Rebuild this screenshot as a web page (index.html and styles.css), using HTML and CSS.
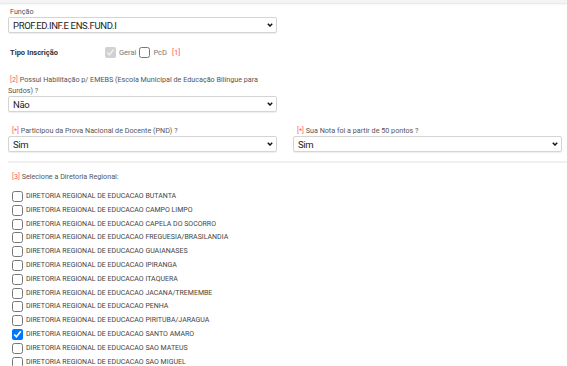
FILE: index.html
```html
<!DOCTYPE html>
<html lang="pt-BR">
<head>
    <meta charset="utf-8">
    <title>Inscrição</title>
    <link rel="stylesheet" href="styles.css">
</head>
<body>
    <div class="topo"></div>

    <div class="campo campo-funcao">
      <label class="rotulo" for="funcao">Função</label>
      <div class="selecao">
        <select id="funcao" class="caixa">
          <option>PROF.ED.INF.E ENS.FUND.I</option>
        </select>
        <svg class="seta" width="6" height="4" viewBox="0 0 6 4"><path d="M0.8 0.8 L3 3 L5.2 0.8" fill="none" stroke="#111" stroke-width="1.5"/></svg>
      </div>
    </div>

    <div class="tipo">
      <span class="tipo-titulo">Tipo Inscrição</span>
      <label class="opcao"><input type="checkbox" checked disabled> Geral</label>
      <label class="opcao"><input type="checkbox"> PcD</label>
      <span class="ref">[1]</span>
    </div>

    <div class="campo campo-emebs">
      <label class="rotulo" for="emebs"><span class="ref">[2]</span> Possui Habilitação p/ EMEBS (Escola Municipal de Educação Bilíngue para Surdos) ?</label>
      <div class="selecao">
        <select id="emebs" class="caixa">
          <option>Não</option>
        </select>
        <svg class="seta" width="6" height="4" viewBox="0 0 6 4"><path d="M0.8 0.8 L3 3 L5.2 0.8" fill="none" stroke="#111" stroke-width="1.5"/></svg>
      </div>
    </div>

    <div class="linha">
      <div class="campo">
        <label class="rotulo" for="pnd"><span class="ref">[*]</span> Participou da Prova Nacional de Docente (PND) ?</label>
        <div class="selecao">
          <select id="pnd" class="caixa">
            <option>Sim</option>
          </select>
          <svg class="seta" width="6" height="4" viewBox="0 0 6 4"><path d="M0.8 0.8 L3 3 L5.2 0.8" fill="none" stroke="#111" stroke-width="1.5"/></svg>
        </div>
      </div>
      <div class="campo">
        <label class="rotulo" for="nota"><span class="ref">[*]</span> Sua Nota foi a partir de 50 pontos ?</label>
        <div class="selecao">
          <select id="nota" class="caixa">
            <option>Sim</option>
          </select>
          <svg class="seta" width="6" height="4" viewBox="0 0 6 4"><path d="M0.8 0.8 L3 3 L5.2 0.8" fill="none" stroke="#111" stroke-width="1.5"/></svg>
        </div>
      </div>
    </div>

    <div class="diretorias">
      <p class="rotulo titulo-dre"><span class="ref">[3]</span> Selecione a Diretoria Regional:</p>
      <ul class="lista-dre" id="listaDre"></ul>
    </div>

    <script>
      const diretorias = [
        "BUTANTA", "CAMPO LIMPO", "CAPELA DO SOCORRO", "FREGUESIA/BRASILANDIA",
        "GUAIANASES", "IPIRANGA", "ITAQUERA", "JACANA/TREMEMBE", "PENHA",
        "PIRITUBA/JARAGUA", "SANTO AMARO", "SAO MATEUS", "SAO MIGUEL"
      ];
      const lista = document.getElementById("listaDre");

      diretorias.forEach(nome => {
        const li = document.createElement("li");
        const label = document.createElement("label");
        const input = document.createElement("input");
        input.type = "checkbox";
        input.checked = nome === "SANTO AMARO";
        label.appendChild(input);
        label.appendChild(document.createTextNode("DIRETORIA REGIONAL DE EDUCACAO " + nome));
        li.appendChild(label);
        lista.appendChild(li);
      });
    </script>
</body>
</html>
```

FILE: styles.css
```css
body {
  margin: 0;
  font-family: Roboto, "Liberation Sans", sans-serif;
  color: #444;
  background: #fff;
}

.topo {
  height: 3px;
  background: #f4f4f4;
  box-shadow: 0 1px 2px #e2e2e2;
}

.campo {
  width: 269px;
  margin-left: 8px;
}

.campo-funcao {
  padding-top: 3px;
}

.rotulo {
  display: block;
  font-size: 7.2px;
  line-height: 11px;
  color: #555;
  margin: 0 0 0 2px;
}

.selecao {
  position: relative;
}

.caixa {
  display: block;
  width: 100%;
  height: 16px;
  padding: 0 12px 0 4px;
  font-family: Roboto, sans-serif;
  font-size: 9.5px;
  letter-spacing: -0.35px;
  color: #222;
  background: #fff;
  border: 1px solid #d4d4d4;
  border-radius: 2px;
  box-shadow: 0 1px 1px #eee;
  appearance: none;
  -webkit-appearance: none;
}

.seta {
  position: absolute;
  right: 4px;
  top: 6px;
}

.ref {
  color: #f55;
  padding-left: 2px;
}

.tipo {
  display: flex;
  align-items: center;
  margin: 13px 0 0 10px;
  height: 12px;
  font-size: 7.5px;
}

.tipo-titulo {
  font-weight: bold;
  color: #333;
  width: 95px;
}

.opcao {
  display: flex;
  align-items: center;
  color: #777;
  margin-right: 3px;
}

.opcao input {
  width: 11px;
  height: 11px;
  margin: 0 3px 0 0;
}

.campo-emebs {
  padding-top: 16px;
}

.campo-emebs .rotulo {
  margin-left: 0;
}

.linha {
  display: grid;
  grid-template-columns: 269px 269px;
  column-gap: 16px;
  margin-left: 8px;
  padding: 13px 0 9px;
  border-bottom: 2px solid #f0f0f0;
}

.linha .campo {
  margin-left: 0;
}

.titulo-dre {
  margin: 8px 0 0 10px;
}

.lista-dre {
  list-style: none;
  margin: 8px 0 0 12px;
  padding: 0;
}

.lista-dre li {
  height: 13.8px;
  font-size: 7px;
  color: #444;
}

.lista-dre label {
  display: flex;
  align-items: center;
}

.lista-dre input {
  width: 11px;
  height: 11px;
  margin: 1px 3px 0 0;
}
```
